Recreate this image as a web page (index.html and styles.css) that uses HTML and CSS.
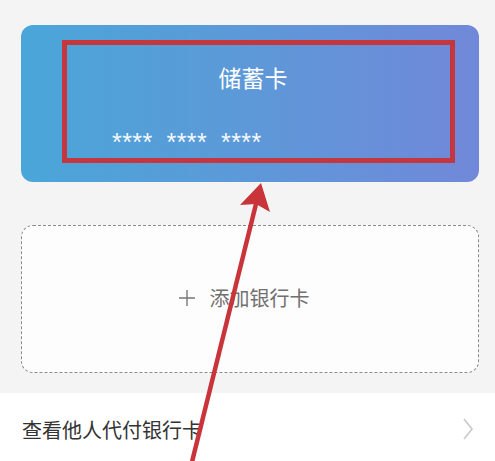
FILE: index.html
```html
<!DOCTYPE html>
<html lang="zh">
<head>
<meta charset="utf-8">
<link rel="stylesheet" href="styles.css">
</head>
<body>
<div class="page">
  <div class="cards">
    <div class="card">
      <div class="card-title">储蓄卡</div>
      <div class="card-number"><span>****</span><span>****</span><span>****</span></div>
      <div class="highlight"></div>
    </div>
    <div class="add-card">
      <span class="plus">
        <svg width="16" height="16" viewBox="0 0 16 16"><path d="M8 0V16M0 8H16" stroke="#777" stroke-width="1.4" fill="none"/></svg>
      </span>
      <span class="add-text">添加银行卡</span>
    </div>
  </div>
  <div class="row">
    <span class="row-text">查看他人代付银行卡</span>
    <svg class="chev" width="12" height="24" viewBox="0 0 12 24"><path d="M2 2L10 12L2 22" stroke="#c9c9c9" stroke-width="1.6" fill="none"/></svg>
  </div>
  <svg class="arrow" width="495" height="461" viewBox="0 0 495 461">
    <line x1="190" y1="470" x2="257" y2="200" stroke="#c8343a" stroke-width="4.5"/>
    <polygon points="261,183 270,212 256,204 240,205" fill="#c8343a"/>
  </svg>
</div>
</body>
</html>
```
FILE: styles.css
```css
html, body {
  margin: 0;
  padding: 0;
}
body {
  background: #f4f4f4;
  font-family: "Noto Sans CJK SC", "Noto Sans", sans-serif;
  width: 495px;
  height: 461px;
  overflow: hidden;
}
.page {
  position: relative;
  height: 461px;
}
.cards {
  padding: 25px 16px 20px 21px;
  display: flex;
  flex-direction: column;
  gap: 43px;
}
.card {
  position: relative;
  height: 157px;
  border-radius: 12px;
  background: linear-gradient(90deg, #4aa6d9 0%, #5b9ad8 45%, #7188d9 100%);
  box-sizing: border-box;
  padding-top: 37px;
}
.card-title {
  text-align: center;
  color: #ffffff;
  font-size: 23px;
  line-height: 30px;
  padding-left: 6px;
}
.card-number {
  margin-top: 38px;
  padding-left: 91px;
  display: flex;
  gap: 14px;
  color: #f4f8ff;
  font-family: "Liberation Sans", sans-serif;
  font-size: 25px;
  line-height: 24px;
  letter-spacing: 0.4px;
  height: 24px;
}
.highlight {
  position: absolute;
  left: 41px;
  top: 15px;
  width: 393px;
  height: 123px;
  border: 5.5px solid #c5373f;
  box-sizing: border-box;
}
.add-card {
  height: 148px;
  box-sizing: border-box;
  border: 1.5px dashed #8a8a8a;
  border-radius: 12px;
  background: #fdfdfd;
  display: flex;
  align-items: center;
  justify-content: center;
  gap: 15px;
  padding-right: 12px;
  padding-bottom: 2px;
}
.plus {
  display: flex;
}
.add-text {
  color: #707070;
  font-size: 20px;
  line-height: 24px;
}
.row {
  background: #ffffff;
  height: 68px;
  display: flex;
  align-items: center;
  justify-content: space-between;
  padding: 0 21px 0 22px;
  box-sizing: border-box;
}
.row-text {
  color: #333333;
  font-size: 20px;
  line-height: 26px;
  margin-top: 6px;
}
.chev {
  margin-top: 4px;
}
.arrow {
  position: absolute;
  left: 0;
  top: 0;
  pointer-events: none;
}
```
